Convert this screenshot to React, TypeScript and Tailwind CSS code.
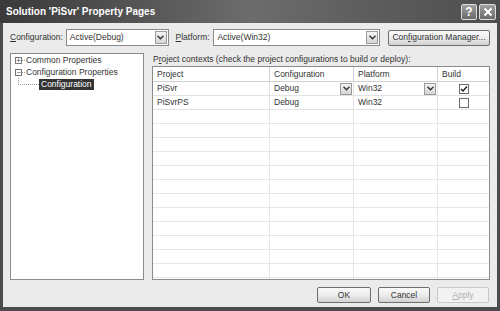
import React from 'react';

const font = { fontFamily: '"Liberation Sans", Arial, sans-serif' };

function Chevron() {
  return (
    <svg width="7" height="5" viewBox="0 0 7 5">
      <path d="M0.5 0.8 L3.5 3.8 L6.5 0.8" fill="none" stroke="#333" strokeWidth="1.4" />
    </svg>
  );
}

function DropBtn() {
  return (
    <div className="w-[12px] h-full flex items-center justify-center bg-gradient-to-b from-[#f4f4f4] to-[#d6d6d6] border border-[#9a9a9a]">
      <Chevron />
    </div>
  );
}

function Combo({ value, width }: { value: string; width: string }) {
  return (
    <div className={`${width} h-[17px] flex items-stretch bg-white border border-[#8a8a8a]`}>
      <div className="flex-1 pl-[3px] flex items-center text-[#333]">{value}</div>
      <div className="p-px"><DropBtn /></div>
    </div>
  );
}

function Btn({ children, width, disabled }: { children: React.ReactNode; width: string; disabled?: boolean }) {
  return (
    <div
      className={`${width} h-[16px] flex items-center justify-center rounded-[2px] border ${
        disabled
          ? 'border-[#c8c8c8] bg-[#f2f2f2] text-[#b0b0b0]'
          : 'border-[#6e6e6e] bg-gradient-to-b from-[#fafafa] via-[#ececec] to-[#d2d2d2] text-[#333]'
      }`}
    >
      {children}
    </div>
  );
}

const rows = [
  { project: 'PiSvr', config: 'Debug', platform: 'Win32', build: true, active: true },
  { project: 'PiSvrPS', config: 'Debug', platform: 'Win32', build: false, active: false },
];

export default function App() {
  const empty = Array.from({ length: 13 });
  return (
    <div style={font} className="w-[500px] h-[311px] bg-[#4c4c4c] flex flex-col px-[3px] pb-[4px] text-[8.5px] overflow-hidden">
      {/* title bar */}
      <div className="h-[23px] -mx-[3px] flex items-center justify-between pl-[6px] pr-[4px] bg-gradient-to-r from-[#3a3a3a] via-[#6c6c6c] to-[#4e4e4e]">
        <span className="text-white font-bold text-[10px]">Solution 'PiSvr' Property Pages</span>
        <div className="flex gap-[2px]">
          <div className="w-[16px] h-[16px] rounded-[2px] border border-[#dcdcdc] bg-gradient-to-b from-[#a0a0a0] to-[#6a6a6a] flex items-center justify-center text-white font-bold text-[12px]">?</div>
          <div className="w-[17px] h-[16px] rounded-[2px] border border-[#dcdcdc] bg-gradient-to-b from-[#a0a0a0] to-[#6a6a6a] flex items-center justify-center">
            <svg width="10" height="10" viewBox="0 0 10 10">
              <path d="M1.5 1.5 L8.5 8.5 M8.5 1.5 L1.5 8.5" stroke="white" strokeWidth="2" />
            </svg>
          </div>
        </div>
      </div>

      {/* body */}
      <div className="flex-1 bg-[#ebebeb] flex flex-col px-[7px] pt-[6px]">
        <div className="flex items-center h-[17px]">
          <span className="w-[56px] text-[#333]"><u>C</u>onfiguration:</span>
          <Combo value="Active(Debug)" width="w-[103px]" />
          <span className="ml-[7px] w-[38px] text-[#333]"><u>P</u>latform:</span>
          <Combo value="Active(Win32)" width="w-[167px]" />
          <div className="ml-[8px]">
            <Btn width="w-[102px]">Con<u>f</u>iguration Manager...</Btn>
          </div>
        </div>

        <div className="flex mt-[7px] h-[227px] gap-[8px]">
          {/* tree */}
          <div className="w-[134px] h-full bg-white border border-[#8c8c8c] pl-[4px] text-[#333]">
            <div className="flex items-center h-[12px]">
              <div className="w-[7px] h-[7px] border border-[#777] flex items-center justify-center text-[7px] leading-none">+</div>
              <div className="w-[3px] border-t border-dotted border-[#999]" />
              <span className="ml-[1px]">Common Properties</span>
            </div>
            <div className="flex items-center h-[12px]">
              <div className="w-[7px] h-[7px] border border-[#777] flex items-center justify-center text-[7px] leading-none">−</div>
              <div className="w-[3px] border-t border-dotted border-[#999]" />
              <span className="ml-[1px]">Configuration Properties</span>
            </div>
            <div className="flex items-center h-[12px] pl-[3px]">
              <div className="w-[21px] h-[7px] border-l border-b border-dotted border-[#999] -mt-[6px]" />
              <span className="bg-[#333] text-white px-[2px] h-[11px] flex items-center">Configuration</span>
            </div>
          </div>

          {/* grid */}
          <div className="flex-1 flex flex-col">
            <div className="h-[13px] text-[#333] pl-[1px]">P<u>r</u>oject contexts (check the project configurations to build or deploy):</div>
            <div className="flex-1 bg-white border border-[#8c8c8c] overflow-hidden text-[#333]">
              <div className="flex h-[15px] border-b border-[#d0d0d0]">
                <div className="w-[117px] pl-[4px] flex items-center border-r border-[#d0d0d0]">Project</div>
                <div className="w-[84px] pl-[4px] flex items-center border-r border-[#d0d0d0]">Configuration</div>
                <div className="w-[84px] pl-[4px] flex items-center border-r border-[#d0d0d0]">Platform</div>
                <div className="flex-1 pl-[4px] flex items-center">Build</div>
              </div>
              {rows.map((r) => (
                <div key={r.project} className="flex h-[14px] border-b border-[#e2e2e2]">
                  <div className="w-[117px] pl-[4px] flex items-center border-r border-[#e2e2e2]">{r.project}</div>
                  <div className="w-[84px] pl-[4px] flex items-center justify-between border-r border-[#e2e2e2]">
                    <span>{r.config}</span>
                    {r.active && <div className="h-[12px] mr-px"><DropBtn /></div>}
                  </div>
                  <div className="w-[84px] pl-[4px] flex items-center justify-between border-r border-[#e2e2e2]">
                    <span>{r.platform}</span>
                    {r.active && <div className="h-[12px] mr-px"><DropBtn /></div>}
                  </div>
                  <div className="flex-1 flex items-center justify-center">
                    <div className="w-[10px] h-[10px] border border-[#6a6a6a] bg-white flex items-center justify-center">
                      {r.build && (
                        <svg width="8" height="8" viewBox="0 0 8 8">
                          <path d="M1 4 L3 6 L7 1.5" fill="none" stroke="#222" strokeWidth="1.5" />
                        </svg>
                      )}
                    </div>
                  </div>
                </div>
              ))}
              {empty.map((_, i) => (
                <div key={i} className="flex h-[14px] border-b border-[#e6e6e6]">
                  <div className="w-[117px] border-r border-[#e6e6e6]" />
                  <div className="w-[84px] border-r border-[#e6e6e6]" />
                  <div className="w-[84px] border-r border-[#e6e6e6]" />
                  <div className="flex-1" />
                </div>
              ))}
            </div>
          </div>
        </div>

        <div className="flex justify-end gap-[7px] mt-[7px] pr-[1px]">
          <Btn width="w-[54px]">OK</Btn>
          <Btn width="w-[52px]">Cancel</Btn>
          <Btn width="w-[52px]" disabled><u>A</u>pply</Btn>
        </div>
      </div>
    </div>
  );
}
